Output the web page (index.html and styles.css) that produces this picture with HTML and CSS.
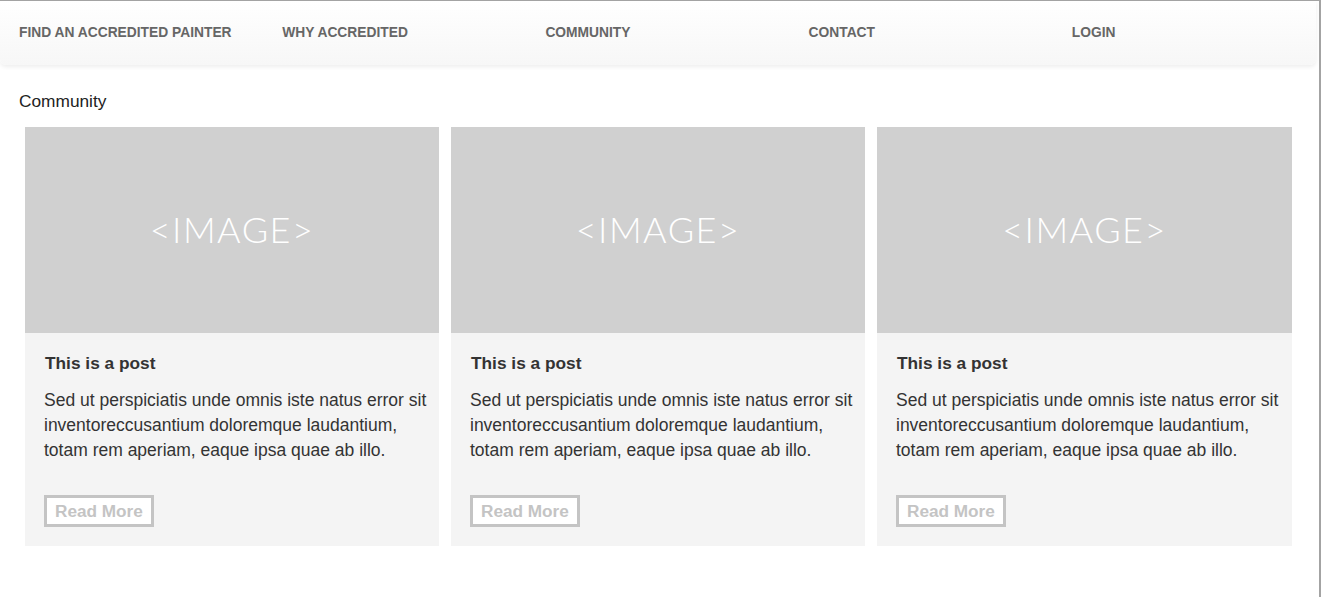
FILE: index.html
```html
<!DOCTYPE html>
<html>
<head>
<meta charset="utf-8">
<link rel="stylesheet" href="styles.css">
</head>
<body>
<div class="frame">
  <nav class="nav">
    <a class="nav-item" href="#">FIND AN ACCREDITED PAINTER</a>
    <a class="nav-item" href="#">WHY ACCREDITED</a>
    <a class="nav-item" href="#">COMMUNITY</a>
    <a class="nav-item" href="#">CONTACT</a>
    <a class="nav-item" href="#">LOGIN</a>
  </nav>
  <main class="main">
    <h1 class="page-title">Community</h1>
    <div class="cards">
      <article class="card">
        <div class="card-image">&lt;IMAGE&gt;</div>
        <div class="card-body">
          <h2 class="card-title">This is a post</h2>
          <p class="card-text">Sed ut perspiciatis unde omnis iste natus error sit inventoreccusantium doloremque laudantium, totam rem aperiam, eaque ipsa quae ab illo.</p>
          <a class="btn" href="#">Read More</a>
        </div>
      </article>
      <article class="card">
        <div class="card-image">&lt;IMAGE&gt;</div>
        <div class="card-body">
          <h2 class="card-title">This is a post</h2>
          <p class="card-text">Sed ut perspiciatis unde omnis iste natus error sit inventoreccusantium doloremque laudantium, totam rem aperiam, eaque ipsa quae ab illo.</p>
          <a class="btn" href="#">Read More</a>
        </div>
      </article>
      <article class="card">
        <div class="card-image">&lt;IMAGE&gt;</div>
        <div class="card-body">
          <h2 class="card-title">This is a post</h2>
          <p class="card-text">Sed ut perspiciatis unde omnis iste natus error sit inventoreccusantium doloremque laudantium, totam rem aperiam, eaque ipsa quae ab illo.</p>
          <a class="btn" href="#">Read More</a>
        </div>
      </article>
    </div>
  </main>
</div>
</body>
</html>
```

FILE: styles.css
```css
* { box-sizing: border-box; }
html, body { margin: 0; padding: 0; background: #fff; }
body { font-family: "Liberation Sans", Arial, sans-serif; }

.frame {
  width: 1321px;
  height: 597px;
  border-top: 1px solid #a3a3a3;
  border-right: 2px solid #a3a3a3;
  overflow: hidden;
}

.nav {
  width: 1316px;
  height: 64px;
  display: grid;
  grid-template-columns: repeat(5, 1fr);
  align-items: center;
  background: linear-gradient(#ffffff, #f7f7f7);
  border-radius: 0 0 6px 6px;
  box-shadow: 0 2px 4px rgba(0, 0, 0, 0.07);
}

.nav-item {
  padding-left: 19px;
  font-size: 13.8px;
  font-weight: bold;
  color: #666;
  text-decoration: none;
  padding-bottom: 2px;
}

.main {
  padding: 26px 0 0 19px;
}

.page-title {
  margin: 0;
  font-size: 17.3px;
  font-weight: normal;
  color: #222;
  line-height: 20px;
}

.cards {
  display: grid;
  grid-template-columns: 414px 414px 415px;
  gap: 12px;
  margin: 16px 0 0 6px;
}

.card {
  background: #f4f4f4;
  height: 419px;
}

.card-image {
  height: 206px;
  background: #d0d0d0;
  color: #fff;
  display: flex;
  align-items: center;
  justify-content: center;
  font-family: "Lato", sans-serif;
  font-weight: 300;
  font-size: 36px;
  letter-spacing: 1.5px;
  padding-bottom: 2px;
}

.card-body {
  padding: 19px 8px 0 20px;
}

.card-title {
  margin: 0;
  font-size: 17.3px;
  font-weight: bold;
  color: #333;
  line-height: 22px;
}

.card-text {
  margin: 14px 0 0 -1px;
  font-size: 17.5px;
  line-height: 25px;
  color: #333;
}

.btn {
  display: inline-block;
  margin: 32px 0 0 -1px;
  height: 32px;
  padding: 0 8px;
  border: 3px solid #c4c4c4;
  background: #fff;
  color: #c4c4c4;
  font-size: 17.2px;
  font-weight: bold;
  line-height: 26px;
  text-decoration: none;
}
```
